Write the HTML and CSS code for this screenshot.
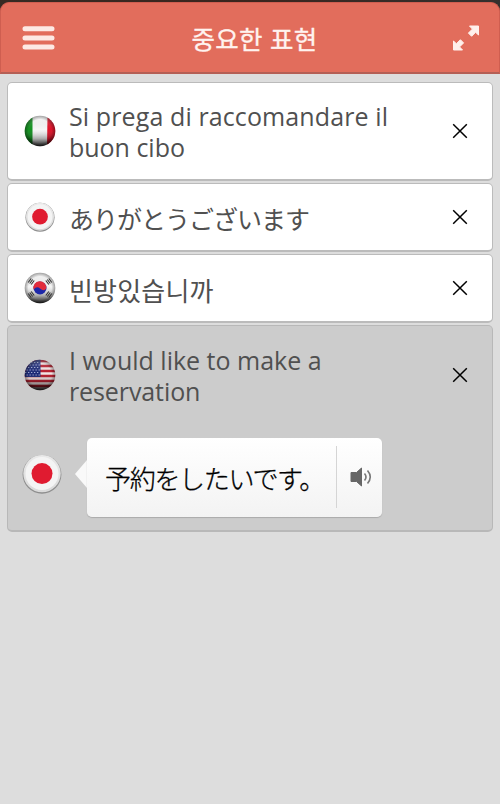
FILE: index.html
```
<!DOCTYPE html>
<html lang="ko">
<head>
<meta charset="utf-8">
<title>중요한 표현</title>
<link rel="stylesheet" href="styles.css">
</head>
<body>
<svg width="0" height="0" class="defs">
  <defs>
    <linearGradient id="shade" x1="0" y1="0" x2="0" y2="1">
      <stop offset="0" stop-color="#fff" stop-opacity=".25"/>
      <stop offset=".45" stop-color="#888" stop-opacity="0"/>
      <stop offset=".75" stop-color="#000" stop-opacity=".3"/>
      <stop offset="1" stop-color="#000" stop-opacity=".9"/>
    </linearGradient>
    <radialGradient id="rim">
      <stop offset=".75" stop-color="#000" stop-opacity="0"/>
      <stop offset="1" stop-color="#000" stop-opacity=".35"/>
    </radialGradient>
    <linearGradient id="pearl" x1="0" y1="0" x2="0" y2="1">
      <stop offset="0" stop-color="#e9e9e9"/>
      <stop offset="1" stop-color="#dadada"/>
    </linearGradient>
    <clipPath id="ball"><circle cx="16" cy="16" r="15.3"/></clipPath>
    <symbol id="close" viewBox="0 0 16 16"><path d="M1.2 1.2l13.6 13.6M14.8 1.2L1.2 14.8" stroke="#000" stroke-width="1.5"/></symbol>
    <symbol id="japan" viewBox="0 0 40 40">
      <circle cx="20" cy="20.4" r="19.4" fill="#8e8e8e"/>
      <circle cx="20" cy="19.6" r="18.7" fill="url(#pearl)"/>
      <circle cx="20" cy="19.6" r="16.5" fill="#f4f4f4"/>
      <circle cx="20" cy="19.6" r="10.5" fill="#e01b30"/>
    </symbol>
  </defs>
</svg>
<header class="bar">
  <svg class="menu" viewBox="0 0 34 26" stroke="#fde9e4" stroke-width="5" stroke-linecap="round"><path d="M4 3.7h27M4 13h27M4 22h27"/></svg>
  <h1 class="title">중요한 표현</h1>
  <svg class="expand" viewBox="0 0 28 28">
    <g fill="#fff0ec" stroke="#fff0ec" stroke-linejoin="round">
      <path d="M17.5 2h9v9l-2.900-2.700-4 4-3.200-3.200 4-4z"/>
      <path d="M10.5 26h-9v-9l2.900 2.700 4-4 3.200 3.200-4 4z"/>
    </g>
  </svg>
</header>
<main class="list">
  <section class="card tall">
    <div class="row">
      <svg class="flag" viewBox="0 0 32 32">
        <g clip-path="url(#ball)"><path fill="#f6f6f6" d="M0 0h32v32H0z"/><path fill="#159322" d="M0 0h8.5v32H0z"/><path fill="#e0142a" d="M23.5 0H32v32h-9z"/></g>
        <circle cx="16" cy="16" r="15.3" fill="url(#shade)"/><circle cx="16" cy="16" r="15.3" fill="url(#rim)"/>
      </svg>
      <p class="phrase latin" lang="it"><span class="line it1">Si prega di raccomandare il</span><span class="line it2">buon cibo</span></p>
      <svg class="close"><use href="#close"/></svg>
    </div>
  </section>
  <section class="card">
    <div class="row">
      <svg class="flag small"><use href="#japan"/></svg>
      <p class="phrase ja" lang="ja">ありがとうございます</p>
      <svg class="close"><use href="#close"/></svg>
    </div>
  </section>
  <section class="card">
    <div class="row">
      <svg class="flag" viewBox="0 0 32 32">
        <circle cx="16" cy="16" r="15.3" fill="#f4f4f4"/>
        <circle cx="16" cy="16" r="15.3" fill="url(#shade)"/><circle cx="16" cy="16" r="15.3" fill="url(#rim)"/>
        <circle cx="16" cy="16" r="6.5" fill="#1d28a8"/>
        <path fill="#e22c3c" d="M9.6 17.5A6.5 6.5 0 1 1 22.3 16.5Q20 20 16 16.5Q13 13.5 9.6 17.5z"/>
        <g fill="none" stroke="#333" stroke-width="1.1">
          <path d="M4.200 10.500l3-4M5.700 11.500l3-4M7.200 12.500l3-4M27.800 10.500l-3-4M26.300 11.500l-3-4M24.800 12.500l-3-4M4.200 21.500l3 4M5.700 20.500l3 4M7.200 19.500l3 4M27.800 21.500l-3 4M26.300 20.500l-3 4M24.800 19.500l-3 4"/>
        </g>
      </svg>
      <p class="phrase ko">빈방있습니까</p>
      <svg class="close"><use href="#close"/></svg>
    </div>
  </section>
  <section class="card open">
    <div class="row">
      <svg class="flag" viewBox="0 0 32 32">
        <g clip-path="url(#ball)">
          <path fill="#f2e4e4" d="M0 0h32v32H0z"/>
          <path stroke="#b81c2c" stroke-width="2.5" d="M0 2h32M0 7h32M0 12h32M0 17h32M0 22h32M0 27h32"/>
          <path fill="#1e2b78" d="M0 0h16.500v18H0z"/>
          <path stroke="#a0a9d2" stroke-width="1.2" stroke-dasharray="1.3 1.7" d="M1 3.500h15M2.500 6h14M1 8.500h15M2.500 11h14M1 13.500h15M2.500 16h14"/>
        </g>
        <circle cx="16" cy="16" r="15.3" fill="url(#shade)"/><circle cx="16" cy="16" r="15.3" fill="url(#rim)"/>
      </svg>
      <p class="phrase latin" lang="en"><span class="line en1">I would like to make a</span><span class="line en2">reservation</span></p>
      <svg class="close"><use href="#close"/></svg>
    </div>
    <div class="answer">
      <svg class="big"><use href="#japan"/></svg>
      <svg class="tail" viewBox="0 0 12 28"><path fill="#f9f9f9" d="M12 0v28L0 14z"/></svg>
      <div class="bubble">
        <p class="translation" lang="ja">予約をしたいです。</p>
        <div class="speak">
          <svg class="speaker" viewBox="0 0 22 20"><path fill="#666" stroke="#666" stroke-linejoin="round" d="M1 5.500h5.500L11.500 1v18L6.500 14.500H1z"/><path fill="none" stroke="#777" stroke-width="1.600" d="M14.500 6.500q3 3.500 0 7M17.500 3.500q5.500 6.500 0 13"/></svg>
        </div>
      </div>
    </div>
  </section>
</main>
</body>
</html>
```
FILE: styles.css
```
* { box-sizing: border-box; }
body {
  margin: 0;
  height: 804px;
  overflow: hidden;
  background: linear-gradient(90deg, #362a23, #3b251e 50%, #33302e) 0 0 / 100% 20px no-repeat, #ddd;
  font-family: "Open Sans", "Noto Sans CJK KR", sans-serif;
  color: #505050;
}
.defs { display: block; }
h1, p { margin: 0; font-weight: 400; white-space: nowrap; }
.bar {
  display: flex;
  align-items: center;
  justify-content: space-between;
  height: 72px;
  margin-top: 2px;
  padding: 2px 20px 2px;
  background: #e26d5c;
  border: 1px solid #cf5e50;
  border-bottom: 2px solid #b45f55;
  border-radius: 9px 9px 0 0;
}
.menu { width: 34px; height: 26px; }
.title {
  font: 400 25.5px/36px "Noto Sans CJK KR", sans-serif;
  letter-spacing: 0.3px;
  color: #fff3ef;
  -webkit-text-stroke: 0.3px #fff3ef;
  margin-left: 2px;
}
.expand { width: 28px; height: 28px; margin-right: -1px; }
.list {
  display: flex;
  flex-direction: column;
  gap: 2px;
  height: 730px;
  padding: 8px 7px 0;
  background: #ddd;
}
.card {
  height: 69px;
  background: #fff;
  border: 1px solid #bbb;
  border-bottom-width: 2px;
  border-radius: 5px;
}
.card.tall { height: 99px; }
.card.open { height: 207px; background: #ccc; border-color: #b8b8b8; }
.row {
  display: flex;
  align-items: center;
  height: 100%;
  padding: 0 24px 0 16px;
}
.open .row { height: 98px; }
.flag { width: 32px; height: 32px; margin-right: 13px; }
.flag.small { width: 30px; height: 30px; margin: 0 14px 0 1px; }
.phrase { flex: 1; font-size: 25px; line-height: 31px; }
.latin { padding-top: 2px; }
.line { display: block; width: max-content; }
.it1 { letter-spacing: 0.11px; }
.it2 { letter-spacing: -0.02px; }
.en1 { letter-spacing: 0; }
.en2 { letter-spacing: -0.1px; }
.ja { font-family: "Noto Sans CJK JP", sans-serif; letter-spacing: -1px; padding-top: 2px; }
.ko { font-family: "Noto Sans CJK KR", sans-serif; font-size: 26px; letter-spacing: 0.2px; padding-top: 2px; }
.close { width: 16px; height: 16px; }
.answer { display: flex; align-items: center; height: 98px; padding-left: 14px; }
.big { width: 40px; height: 40px; margin-right: 13px; margin-top: 2px; }
.tail { width: 12px; height: 28px; margin-top: 2px; }
.bubble {
  display: flex;
  align-items: center;
  width: 295px;
  height: 79px;
  margin-top: 9px;
  background: linear-gradient(#fff, #f3f3f3);
  border-radius: 5px;
  box-shadow: 0 1px 1px #aaa;
}
.translation {
  flex: 1;
  padding-left: 18px;
  font: 300 26px/36px "Noto Sans CJK JP", sans-serif;
  letter-spacing: -1.3px;
  color: #000;
  -webkit-text-stroke: 0.3px #000;
}
.speak {
  display: flex;
  align-items: center;
  width: 46px;
  height: 62px;
  margin-top: -2px;
  padding-left: 13px;
  border-left: 1px solid #d5d5d5;
}
.speaker { width: 22px; height: 20px; }
```
